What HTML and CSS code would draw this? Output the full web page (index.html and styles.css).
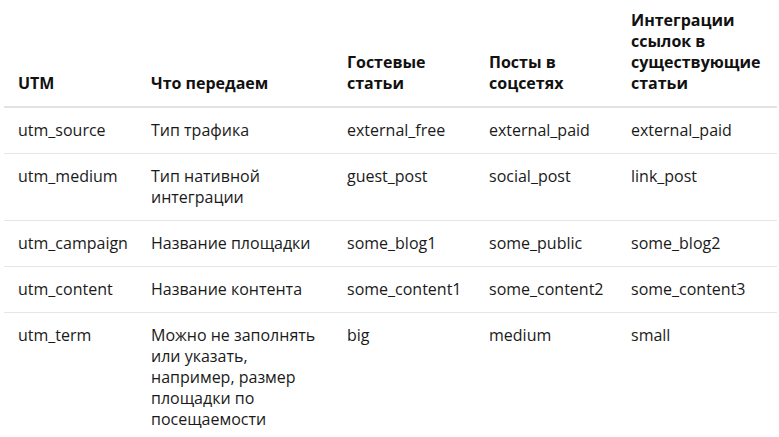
FILE: index.html
```html
<!DOCTYPE html>
<html lang="ru">
<head>
<meta charset="utf-8">
<link rel="stylesheet" href="styles.css">
</head>
<body>
<table class="utm">
  <colgroup>
    <col class="c1"><col class="c2"><col class="c3"><col class="c4"><col class="c5">
  </colgroup>
  <thead>
    <tr>
      <th>UTM</th>
      <th>Что передаем</th>
      <th>Гостевые статьи</th>
      <th>Посты в соцсетях</th>
      <th>Интеграции ссылок в существующие статьи</th>
    </tr>
  </thead>
  <tbody>
    <tr><td>utm_source</td><td>Тип трафика</td><td>external_free</td><td>external_paid</td><td>external_paid</td></tr>
    <tr><td>utm_medium</td><td>Тип нативной интеграции</td><td>guest_post</td><td>social_post</td><td>link_post</td></tr>
    <tr><td>utm_campaign</td><td>Название площадки</td><td>some_blog1</td><td>some_public</td><td>some_blog2</td></tr>
    <tr><td>utm_content</td><td>Название контента</td><td>some_content1</td><td>some_content2</td><td>some_content3</td></tr>
    <tr><td>utm_term</td><td>Можно не заполнять или указать, например, размер площадки по посещаемости</td><td>big</td><td>medium</td><td>small</td></tr>
  </tbody>
</table>
</body>
</html>
```
FILE: styles.css
```css
html, body {
  margin: 0;
  padding: 0;
  background: #ffffff;
}
body {
  padding: 0 2px 0 4px;
  font-family: "Open Sans", "Liberation Sans", sans-serif;
  font-size: 16px;
  line-height: 21px;
  color: #1a1a1a;
}
.utm {
  width: 773px;
  border-collapse: collapse;
  table-layout: fixed;
}
.c1 { width: 133px; }
.c2 { width: 196px; }
.c3 { width: 142px; }
.c4 { width: 142px; }
.c5 { width: 160px; }
.utm th {
  text-align: left;
  vertical-align: bottom;
  font-weight: 700;
  color: #111111;
  padding: 10px 14px 12px 14px;
  border-bottom: 2px solid #e2e2e2;
}
.utm td {
  text-align: left;
  vertical-align: top;
  padding: 12px 14px 12px 14px;
  border-bottom: 1px solid #e6e6e6;
}
.utm tbody tr:last-child td {
  border-bottom: none;
}
```
